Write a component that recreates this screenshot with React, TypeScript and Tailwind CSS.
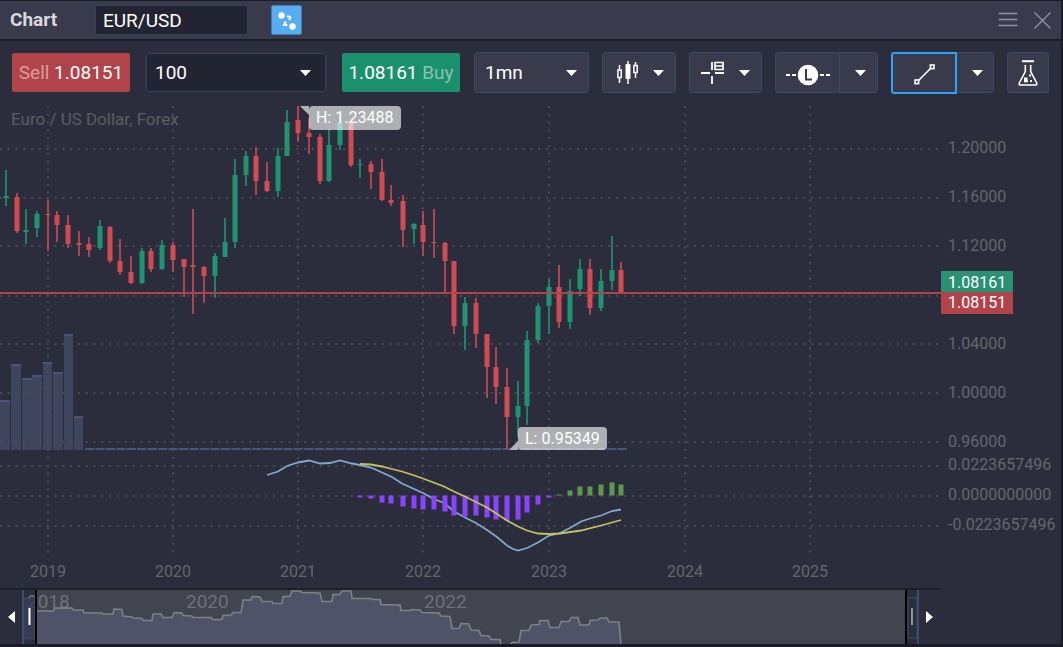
import { useState } from "react";
import { clsx } from "clsx";

const UP = "#1f9370";
const DOWN = "#d04b52";
const MUTED = "#65666b";

// x, wick top, wick bottom, body top, body bottom, rising
const candles: [number, number, number, number, number, 0 | 1][] = [
  [6, 170, 206, 196, 198, 1],
  [17, 193, 233, 197, 231, 0],
  [26, 209, 244, 230, 232, 1],
  [37, 211, 237, 214, 228, 1],
  [48, 200, 251, 214, 215, 0],
  [57, 211, 242, 215, 225, 0],
  [68, 215, 248, 225, 244, 0],
  [79, 231, 256, 243, 245, 0],
  [89, 237, 257, 244, 250, 0],
  [100, 220, 250, 226, 248, 1],
  [110, 226, 263, 227, 261, 0],
  [120, 239, 275, 261, 272, 0],
  [131, 256, 284, 272, 283, 0],
  [142, 248, 284, 251, 283, 1],
  [151, 248, 272, 251, 269, 0],
  [162, 240, 270, 245, 269, 1],
  [173, 242, 272, 245, 260, 0],
  [184, 259, 297, 259, 267, 0],
  [193, 209, 314, 265, 267, 0],
  [204, 266, 303, 267, 276, 0],
  [215, 253, 298, 256, 276, 1],
  [225, 218, 257, 242, 257, 1],
  [235, 159, 248, 175, 242, 1],
  [246, 151, 186, 156, 175, 1],
  [256, 147, 195, 156, 181, 0],
  [267, 162, 192, 181, 191, 0],
  [278, 148, 197, 156, 191, 1],
  [287, 110, 156, 122, 156, 1],
  [298, 106, 142, 120, 133, 0],
  [309, 118, 154, 133, 137, 0],
  [320, 134, 184, 137, 181, 0],
  [329, 129, 182, 145, 181, 1],
  [340, 115, 150, 122, 145, 1],
  [351, 119, 167, 122, 165, 0],
  [360, 159, 178, 164, 165, 1],
  [371, 161, 189, 164, 172, 0],
  [382, 159, 201, 172, 200, 0],
  [391, 185, 206, 200, 203, 0],
  [403, 195, 247, 201, 230, 0],
  [414, 223, 244, 224, 229, 1],
  [423, 211, 256, 225, 242, 0],
  [434, 209, 258, 242, 243, 0],
  [445, 242, 292, 243, 261, 0],
  [454, 261, 334, 261, 326, 0],
  [465, 297, 350, 303, 326, 1],
  [476, 298, 348, 303, 334, 0],
  [487, 334, 398, 334, 367, 0],
  [496, 347, 404, 367, 387, 0],
  [507, 368, 449, 387, 417, 0],
  [518, 381, 437, 406, 417, 1],
  [527, 331, 425, 340, 406, 1],
  [538, 303, 343, 306, 340, 1],
  [549, 279, 334, 287, 306, 1],
  [559, 265, 328, 287, 322, 0],
  [570, 279, 329, 291, 322, 1],
  [580, 259, 296, 269, 289, 1],
  [590, 259, 315, 269, 308, 0],
  [601, 269, 311, 281, 308, 1],
  [612, 236, 290, 270, 281, 1],
  [621, 262, 292, 270, 292, 0],
];

const volumes = [
  [0, 10, 400],
  [11, 10, 364],
  [22, 10, 378],
  [32, 10, 375],
  [43, 9, 362],
  [53, 10, 372],
  [64, 9, 334],
  [74, 9, 416],
];

// signed bar heights, one for each of the last 26 candles
const histogram = [
  -2, -3, -7, -8, -11, -13, -14, -14, -16, -20, -21, -20, -22, -24, -25, -24, -17,
  -9, -2, 1, 5, 9, 9, 11, 13, 11,
];

const macdLine =
  "267,475 278,471.5 287,466 298,462.5 309,460.5 320,463.5 330,463 340,460.5 352,463.5 360,465 371,467.5 382,472.5 392,477 402,483.5 413,488.5 423,493 433,498.5 444,503 454,511.5 465,517.5 476,523 487,530 497,537 507,545.5 513,549 518,550.5 527,548 538,542.5 549,535.5 559,533.5 570,528 581,521.5 590,518.5 601,515.5 612,511 621,509.5";
const signalLine =
  "360,464 371,464.5 382,466.5 392,469 402,471.5 413,475 423,478.5 444,486.5 454,491.5 465,496.5 487,507.5 507,520.5 518,526.5 527,530.5 538,533.5 549,534 560,533.5 581,530.5 601,525.5 621,520";

const overview =
  "0,21 17,21 19,18 36,18 37,20 47,20 48,23 66,23 67,24 77,24 78,19 86,19.5 87,26 96,27 97,28 106,28.5 107,30.5 116,30.5 117,24 125,24 127,27.5 136,27.5 138,22.5 146,23 147,25.5 156,26 157,27.5 175,27.5 177,29.5 186,29.5 187,25.5 195,25 197,22.5 205,22.5 207,10 215,10 216,6.5 224,7 226,11.5 236,11.5 237,13.5 246,13.5 247,6.5 254,6.5 256,1 264,1 266,2.5 284,3 286,11.5 296,11.5 297,4.5 304,4.5 306,1 315,1 316,8.5 335,8.5 336,9.5 344,9.5 345,14.5 364,15 365,20.5 374,20.5 376,19.5 384,20 386,22.5 403,23 405,26 414,26.5 416,38.5 423,38.5 425,33.5 433,34 435,40 443,40.5 445,45.5 453,46 455,49.5 464,49.5 465,55 474,55 476,52.5 483,52 485,40.5 493,40.5 495,35 503,34.5 504,30.5 512,30.5 514,37.5 523,37.5 525,31.5 533,31.5 535,27.5 542,27.5 544,35 553,35 554,30.5 562,30 564,28 571,28 573,32 583,32 585,55";

const gridRows = [149, 198, 246, 296, 344, 393, 442, 466, 496, 526];
const years = [
  { x: 48, label: "2019" },
  { x: 173, label: "2020" },
  { x: 298, label: "2021" },
  { x: 423, label: "2022" },
  { x: 549, label: "2023" },
  { x: 685, label: "2024" },
  { x: 810, label: "2025" },
];
const priceLabels = [
  { y: 153, label: "1.20000" },
  { y: 202, label: "1.16000" },
  { y: 251, label: "1.12000" },
  { y: 349, label: "1.04000" },
  { y: 398, label: "1.00000" },
  { y: 447, label: "0.96000" },
  { y: 470, label: "0.0223657496" },
  { y: 500, label: "0.0000000000" },
  { y: 530, label: "-0.0223657496" },
];

const toolButton =
  "flex h-[41px] items-center justify-center rounded-[3px] border border-[#3a4a66] bg-[#3a3a4d] text-white";

function Caret({ className }: { className?: string }) {
  return (
    <svg width="11" height="6" viewBox="0 0 11 6" className={clsx("shrink-0", className)} aria-hidden="true">
      <path d="M0 0h11L5.5 6z" fill="#fff" />
    </svg>
  );
}

function Header() {
  const [symbol, setSymbol] = useState("EUR/USD");
  return (
    <header className="flex h-[41px] items-center border-t border-b-2 border-[#1a1b25] bg-[#3a3a4d] px-[10px]">
      <h1 className="w-[85px] text-[19px] leading-6 font-bold text-[#d9d9df]">Chart</h1>
      <input
        aria-label="Symbol"
        value={symbol}
        onChange={(e) => setSymbol(e.target.value)}
        className="h-[30px] w-[153px] rounded-[2px] border border-[#34435c] bg-[#222531] px-[7px] text-[19px] text-white outline-none"
      />
      <button
        aria-label="Link symbol"
        className="ml-[23px] flex h-[30px] w-[31px] items-center justify-center rounded-[2px] border border-[#3f7fb4] bg-[#57adf0]"
      >
        <svg width="31" height="29" viewBox="0 0 31 29" fill="none" className="shrink-0">
          <circle cx="10.5" cy="9.5" r="3.2" fill="#fff" />
          <circle cx="21.5" cy="20.5" r="3.2" fill="#fff" />
          <path d="M16 10.500h2.200c1.300 0 1.700 1.800.6 2.500l-1.300.8" stroke="#fff" strokeWidth="1.8" />
          <path d="M15.500 16.500h-1.700l-.8 2.600h3.500" stroke="#fff" strokeWidth="1.8" />
        </svg>
      </button>
      <div className="ml-auto flex items-center gap-4">
        <button aria-label="Menu">
          <svg width="20" height="18" viewBox="0 0 20 18" className="block" stroke="#93939c" strokeWidth="1.3">
            <path d="M.5 2.500h19M.5 8.500h19M.5 14.500h19" />
          </svg>
        </button>
        <button aria-label="Close">
          <svg width="17" height="17" viewBox="0 0 17 17" className="block" stroke="#93939c" strokeWidth="1.3">
            <path d="M.5.5l16 16M16.500.5l-16 16" />
          </svg>
        </button>
      </div>
    </header>
  );
}

function Toolbar() {
  const [amount, setAmount] = useState("100");
  const [period, setPeriod] = useState("1mn");
  return (
    <div className="flex h-[64px] items-start gap-[14px] px-3 pt-[11px] text-[19px] leading-6 text-white">
      <div className="flex h-[41px] shrink-0 items-center gap-4">
        <button className="h-[39px] w-[118px] rounded-[2px] bg-[#b0444a] whitespace-nowrap">
          <span className="text-[#d99ea1]">Sell</span> 1.08151
        </button>
        <div className="relative">
          <select
            aria-label="Amount"
            value={amount}
            onChange={(e) => setAmount(e.target.value)}
            className="block h-[39px] w-[180px] appearance-none rounded-[3px] border border-[#34435c] bg-[#222531] px-2 outline-none"
          >
            <option>100</option>
            <option>1000</option>
          </select>
          <Caret className="pointer-events-none absolute top-[17px] right-[15px]" />
        </div>
        <button className="h-[39px] w-[118px] rounded-[2px] bg-[#1b906c] whitespace-nowrap">
          1.08161 <span className="text-[#88c4b1]">Buy</span>
        </button>
      </div>

      <div className="flex shrink-0 gap-[13px]">
        <div className="relative">
          <select
            aria-label="Period"
            value={period}
            onChange={(e) => setPeriod(e.target.value)}
            className="block h-[41px] w-[115px] appearance-none rounded-[3px] border border-[#3a4a66] bg-[#3a3a4d] px-[10px] outline-none"
          >
            <option>1mn</option>
            <option>1d</option>
          </select>
          <Caret className="pointer-events-none absolute top-[18px] right-[12px]" />
        </div>

        <button aria-label="Chart type" className={clsx(toolButton, "w-[74px] gap-[14px] pl-[2px]")}>
          <svg width="22" height="23" viewBox="0 0 22 23" fill="none" stroke="#fff">
            <path d="M2.500 4v5M2.500 17v5M11 0v23M18.500 1v4M18.500 12v5" strokeWidth="1.5" />
            <rect x=".9" y="9" width="3.3" height="7.5" strokeWidth="1.5" />
            <rect x="8.5" y="3" width="5" height="15" rx="1" fill="#fff" stroke="none" />
            <rect x="16.9" y="4.5" width="3.3" height="7" strokeWidth="1.5" />
          </svg>
          <Caret />
        </button>

        <button aria-label="Crosshair" className={clsx(toolButton, "w-[73px] gap-[15px]")}>
          <svg width="23" height="23" viewBox="0 0 23 23" fill="none" stroke="#fff">
            <path d="M0 12h9M14 12h9M11 1v8M11 15v8" strokeWidth="1.8" />
            <path d="M14 1.500h8v7h-8zM14 5h8" strokeWidth="1.7" />
          </svg>
          <Caret />
        </button>

        <div className="flex">
          <button aria-label="Last price line" className={clsx(toolButton, "w-[65px] rounded-r-none")}>
            <svg width="44" height="22" viewBox="0 0 44 22" fill="none" className="mt-[4px]">
              <path d="M0 11h4M6 11h4M34 11h4M40 11h4" stroke="#fff" strokeWidth="1.8" />
              <circle cx="22" cy="11" r="10.3" fill="#fff" />
              <path d="M20 5v10.500h6" stroke="#3a3a4d" strokeWidth="2" />
            </svg>
          </button>
          <button aria-label="Price line options" className={clsx(toolButton, "-ml-px w-[39px] rounded-l-none pl-[4px]")}>
            <Caret />
          </button>
        </div>

        <div className="flex">
          <button
            aria-label="Draw line"
            className="z-10 flex h-[42px] w-[66px] items-center justify-center rounded-[3px] rounded-r-none border-2 border-[#2ea3f7] bg-[#3a3a4d]"
          >
            <svg width="21" height="21" viewBox="0 0 21 21" fill="none" stroke="#fff" strokeWidth="1.6" className="mt-[3px]">
              <path d="M4 17L17 4" />
              <rect x="1" y="16" width="3.6" height="3.6" />
              <rect x="16.4" y="1" width="3.6" height="3.6" />
            </svg>
          </button>
          <button aria-label="Drawing tools" className={clsx(toolButton, "-ml-px w-[38px] rounded-l-none pl-[4px]")}>
            <Caret />
          </button>
        </div>

        <button aria-label="Studies" className={clsx(toolButton, "w-[42px]")}>
          <svg width="20" height="26" viewBox="0 0 20 26" fill="none" stroke="#fff" strokeWidth="1.6">
            <path d="M4 1.200h12" strokeWidth="2" />
            <path d="M7.300 5v6.500L1.300 23c-.4 1.200.2 2 1.300 2h14.800c1.100 0 1.700-.8 1.300-2L12.700 11.500V5" />
            <path d="M6 17.500h3.500V21H6zM11 14.500h2v2h-2zM12 20h2v2h-2z" fill="#fff" stroke="none" />
            <path d="M6 21.500h4" />
          </svg>
        </button>
      </div>
    </div>
  );
}

function PricePlot() {
  return (
    <svg className="block h-[483px] min-w-0 flex-1 overflow-hidden text-[16px]" role="img" aria-label="EUR/USD monthly price">
      {/* the data is measured from the top of the window, the plot starts below the toolbar */}
      <g transform="translate(0 -105)">
        {volumes.map(([x, w, top]) => (
          <g key={x}>
            <rect x={x} y={top} width={w} height={450 - top} fill="#40455e" />
            <rect x={x} y={top} width={w} height="2" fill="#47557b" />
          </g>
        ))}
        <path d="M85 449H627" stroke="#47557b" strokeWidth="2" strokeDasharray="9.2 1.24" />

        <g stroke="#4c4d5b" strokeWidth="2" strokeDasharray="1.8 6">
          {gridRows.map((y) => (
            <line key={y} x1="0" x2="100%" y1={y} y2={y} />
          ))}
          {years.map(({ x }) => (
            <line key={x} x1={x} x2={x} y1="106" y2="554" />
          ))}
        </g>

        <text x="11" y="125" fill="#5c5d61" className="text-[17px]">Euro / US Dollar, Forex</text>

        {candles.map(([x, high, low, top, bottom, up]) => (
          <g key={x} fill={up ? UP : DOWN}>
            <rect x={x - 1} y={high} width="2" height={low - high} opacity=".8" />
            <rect x={x - 2.5} y={top} width="5" height={Math.max(bottom - top, 1)} />
          </g>
        ))}

        <polyline points={macdLine} fill="none" stroke="#7fa9c8" strokeWidth="1.8" />
        {histogram.map((value, i) => (
          <rect
            key={i}
            x={candles[i + 34][0] - 2.5}
            y={value < 0 ? 495.5 : 495.5 - value}
            width="5"
            height={Math.abs(value)}
            fill={value < 0 ? "#8b43ff" : "#5c9a4b"}
          />
        ))}
        <polyline points={signalLine} fill="none" stroke="#c3bf62" strokeWidth="1.8" />

        <line x1="0" x2="100%" y1="293" y2="293" stroke="#b0444a" strokeWidth="2" />

        <path d="M300 106h9v9z" fill="#b2b2b7" />
        <rect x="309" y="106" width="92" height="24" rx="4" fill="#fff" opacity=".62" />
        <text x="316" y="123" fill="#fff">H: 1.23488</text>
        <path d="M509 450h9v-9z" fill="#b2b2b7" />
        <rect x="518" y="427" width="89" height="23" rx="4" fill="#fff" opacity=".62" />
        <text x="525" y="444" fill="#fff">L: 0.95349</text>

        {years.map(({ x, label }) => (
          <text key={label} x={x} y="577" fill={MUTED} textAnchor="middle">
            {label}
          </text>
        ))}
      </g>
    </svg>
  );
}

function PriceAxis() {
  return (
    <svg className="block h-[483px] w-[120px] shrink-0 text-[16px]" role="img" aria-label="Price axis">
      <g transform="translate(0 -105)">
        {priceLabels.map(({ y, label }) => (
          <text key={label} x="7" y={y} fill={MUTED}>
            {label}
          </text>
        ))}
        <rect x="0" y="271" width="72" height="21" fill="#2a9173" />
        <text x="7" y="288" fill="#fff">1.08161</text>
        <rect x="0" y="292" width="72" height="22" fill="#b0444a" />
        <text x="7" y="308" fill="#fff">1.08151</text>
      </g>
    </svg>
  );
}

function Navigator() {
  return (
    <div className="mr-[121px] flex h-[56px] border-t-2 border-[#1e1f28]">
      <button aria-label="Scroll back" className="flex w-[22px] shrink-0 items-center justify-center">
        <svg width="7" height="12" viewBox="0 0 7 12">
          <path d="M7 0v12L0 6z" fill="#fff" />
        </svg>
      </button>
      <svg className="block h-[54px] min-w-0 flex-1 overflow-hidden text-[19px]" role="img" aria-label="Visible range">
        <rect x="14" width="100%" height="54" fill="#424450" />
        <g transform="translate(14 0)">
          <polygon points={`${overview} 0,55`} fill="#505268" />
        </g>
        <g fill="#6f7173">
          <text x="5" y="18">2018</text>
          <text x="164" y="18">2020</text>
          <text x="402" y="18">2022</text>
        </g>
        <polyline points={overview} transform="translate(14 0)" fill="none" stroke="#7f8186" strokeWidth="1.6" />
        <rect x="1" y="8" width="12" height="41" fill="#3c3e59" fillOpacity=".8" stroke="#3a4f70" />
        <path d="M0 0h1v54" fill="none" stroke="#3a4f70" strokeWidth="2" />
        <path d="M14 0v54" stroke="#000" strokeWidth="2" />
        <path d="M7.500 18v17" stroke="#fff" strokeWidth="2" />
        <svg x="100%" overflow="visible">
          <rect x="-12" width="12" height="54" fill="#2c2d3c" />
          <path d="M-13 0v54" stroke="#000" strokeWidth="2" />
          <rect x="-11" y="8" width="9" height="40" fill="none" stroke="#3a4f70" />
          <path d="M-7 18v17" stroke="#93939c" strokeWidth="2" />
          <path d="M-1 0v54" stroke="#3a4f70" strokeWidth="2" />
        </svg>
      </svg>
      <button aria-label="Scroll forward" className="flex w-[21px] shrink-0 items-center justify-center">
        <svg width="7" height="12" viewBox="0 0 7 12">
          <path d="M0 0v12l7-6z" fill="#fff" />
        </svg>
      </button>
    </div>
  );
}

export default function App() {
  return (
    <div className="min-h-screen bg-[#1a1b25] pr-[2px] pb-[3px] font-['Roboto',sans-serif]">
      <main className="bg-[#2c2d3c]">
        <Header />
        <Toolbar />
        <div className="flex">
          <PricePlot />
          <PriceAxis />
        </div>
        <Navigator />
      </main>
    </div>
  );
}
